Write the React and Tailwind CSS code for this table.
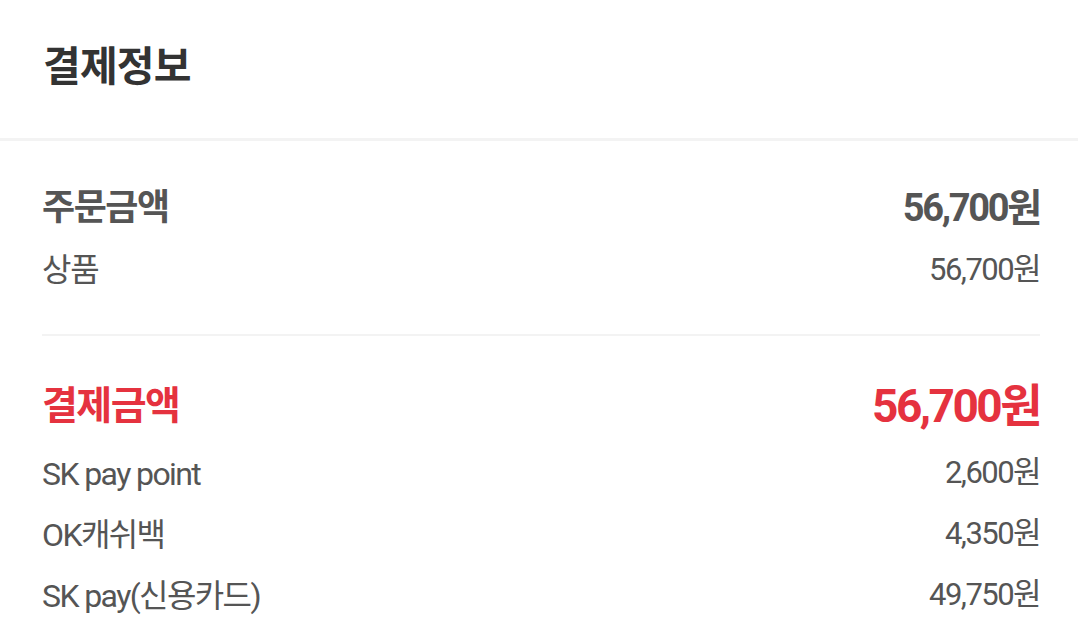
const rows = [
  { label: 'SK pay point', value: '2,600원' },
  { label: 'OK캐쉬백', value: '4,350원' },
  { label: 'SK pay(신용카드)', value: '49,750원' },
];

const font = { fontFamily: 'Roboto, "Noto Sans CJK KR", sans-serif' };

export default function App() {
  return (
    <div className="w-[1078px] h-[637px] bg-white overflow-hidden" style={font}>
      <div className="h-[138px] pl-[43px] pt-[41px]">
        <h2 className="text-[41px] leading-[52px] font-bold text-[#333333] tracking-[-0.02em]">결제정보</h2>
      </div>
      <div className="h-[3px] bg-[#f3f3f3]" />
      <div className="pl-[42px] pr-[38px]">
        <div className="mt-[45px] flex items-center justify-between h-[44px] text-[#555555] font-bold">
          <span className="text-[36px] tracking-[-0.04em]">주문금액</span>
          <span className="text-[38px] tracking-[-0.06em]">56,700원</span>
        </div>
        <div className="mt-[20px] flex items-center justify-between h-[40px] text-[#555555]">
          <span className="text-[32px] tracking-[-0.04em]">상품</span>
          <span className="text-[31px] tracking-[-0.05em]">56,700원</span>
        </div>
        <div className="mt-[44px] h-[2px] bg-[#f3f3f3]" />
        <div className="mt-[45px] flex items-center justify-between h-[50px] text-[#e5323f] font-bold">
          <span className="text-[39px] tracking-[-0.04em]">결제금액</span>
          <span className="text-[46px] tracking-[-0.055em]">56,700원</span>
        </div>
        <div className="mt-[12px] flex flex-col">
          {rows.map((r) => (
            <div key={r.label} className="h-[61px] flex items-center justify-between text-[#555555]">
              <span className="text-[32px] tracking-[-0.05em]">{r.label}</span>
              <span className="text-[31px] tracking-[-0.05em]">{r.value}</span>
            </div>
          ))}
        </div>
      </div>
    </div>
  );
}
